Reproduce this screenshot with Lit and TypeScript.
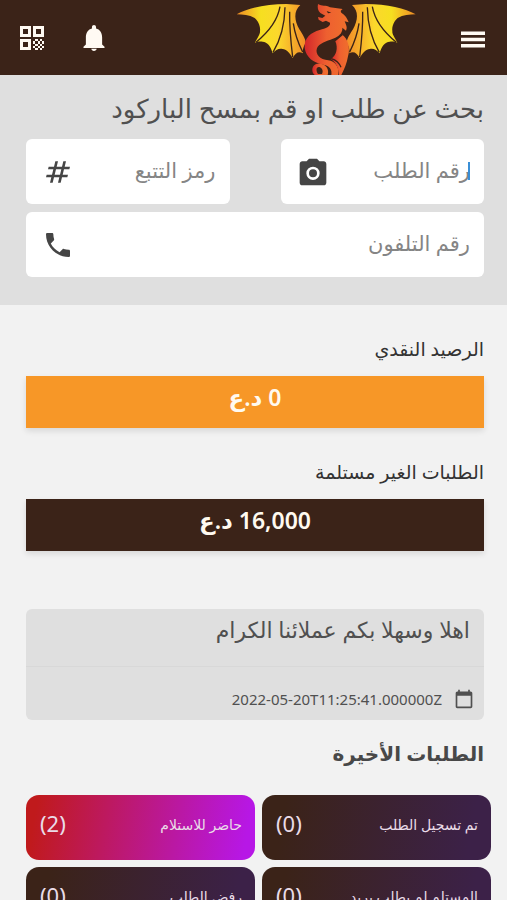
import { LitElement, html, css, svg } from "lit";
import { customElement } from "lit/decorators.js";
import { classMap } from "lit/directives/class-map.js";

const glyph = (d: string) => html`<svg class="glyph" viewBox="0 0 24 24" aria-hidden="true"><path fill-rule="evenodd" d=${d}></path></svg>`;

const PATHS = {
  menu: "M0 5.500h24v3.400H0zM0 11.800h24v3.400H0zM0 18.100h24v3.400H0z",
  bell: "M12 24c1.300 0 2.500-.9 2.500-2h-5c0 1.100 1.200 2 2.500 2zM19.500 18V11.500c0-4.300-2.200-7.500-5.600-8.300V2C13.900.8 13 0 12 0s-1.900.8-1.900 2v1.200C6.700 4 4.500 7.200 4.500 11.500V18l-2.200 2v1.200h19.400V20z",
  camera: "M9 2 7.200 4H4c-1.100 0-2 .9-2 2v14c0 1.100.9 2 2 2h16c1.100 0 2-.9 2-2V6c0-1.100-.9-2-2-2h-3.200L15 2H9zm3 6a5 5 0 1 1 0 10 5 5 0 0 1 0-10zm0 2a3 3 0 1 0 0 6 3 3 0 0 0 0-6z",
  phone: "M6.600 10.800c1.400 2.800 3.800 5.100 6.600 6.600l2.200-2.200c.3-.3.7-.4 1-.2 1.100.4 2.300.6 3.600.6.600 0 1 .4 1 1V20c0 .6-.4 1-1 1C10.600 21 3 13.400 3 4c0-.6.500-1 1-1h3.500c.6 0 1 .4 1 1 0 1.200.2 2.400.6 3.600.1.300 0 .7-.3 1z",
  calendar: "M20 3h-1V1h-2v2H7V1H5v2H4c-1.100 0-2 .9-2 2v16c0 1.100.9 2 2 2h16c1.100 0 2-.9 2-2V5c0-1.100-.9-2-2-2zm0 18H4V8h16z",
  hash: "M20.500 10l.5-2h-4l1-4h-2l-1 4h-4l1-4h-2L9 8H5l-.5 2h4l-1 4h-4L3 16h4l-1 4h2l1-4h4l-1 4h2l1-4h4l.5-2h-4l1-4zm-7 4h-4l1-4h4z",
};

const wing = svg`
  <path fill="url(#gold)" d="M20 43 C50 25 105 12 170 12 L211 15 C190 34 193 61 208 88 C222 110 230 123 225 132 C220 141 217 151 219 160 C207 153 197 157 188 174 C178 157 169 148 158 147 C147 144 137 149 128 160 C123 139 112 126 98 125 C90 123 82 125 75 128 C83 112 91 103 90 93 C92 78 84 63 74 54 C58 45 38 43 20 43Z"></path>
  <path class="vein" d="M150 20 C143 60 116 96 78 127 M165 22 C164 72 152 119 129 157 M179 35 C178 87 183 130 188 171 M190 70 C195 105 206 132 218 156"></path>`;

const dragon = html`
  <svg class="dragon" viewBox="0 0 570 225" role="img" aria-label="التنين">
    <defs>
      <linearGradient id="gold" x1="0" x2="1" y1="0" y2="0">
        <stop offset="0" stop-color="#ef8a25"></stop><stop offset="0.35" stop-color="#f6df20"></stop>
        <stop offset="0.6" stop-color="#fbd82c"></stop><stop offset="1" stop-color="#f28c28"></stop>
      </linearGradient>
      <linearGradient id="fire" x1="0" x2="1" y1="0" y2="0">
        <stop offset="0" stop-color="#d3262b"></stop><stop offset="0.5" stop-color="#ee6030"></stop>
        <stop offset="1" stop-color="#f0702c"></stop>
      </linearGradient>
    </defs>
    ${wing}
    <g transform="translate(577 0) scale(-1 1)">${wing}</g>
    <path fill="url(#fire)" d="M264 12 C276 20 287 14 300 22 L338 27 C332 31 331 34 334 38 C346 45 352 56 356 67 L344 64 C348 75 353 82 348 92 L337 83 C338 96 331 105 316 113 C297 122 275 125 263 140 C254 155 263 174 286 179 C311 181 322 193 325 210 L324 225 L304 225 C307 209 299 197 280 194 C250 188 228 172 224 143 C222 113 243 98 269 90 C288 84 302 80 300 68 L288 62 L278 66 L266 59 L264 51 L277 54 L286 47 L271 39 C263 32 262 22 264 12Z"></path>
    <path fill="url(#fire)" d="M337 104 C353 116 362 143 354 169 C351 190 342 209 334 225 L326 225 C326 205 318 187 303 178 C319 166 325 145 316 124Z"></path>
    <path fill="url(#fire)" fill-rule="evenodd" d="M271 191 C257 188 246 198 247 211 C247 217 250 222 254 225 L293 225 C298 207 289 194 271 191Z M268 201 C278 204 280 215 276 222 L264 222 C258 213 257 200 268 201Z"></path>
    <path class="vein" d="M304 176 C318 180 328 190 333 202 M316 121 L337 104"></path>
    <path fill="#3b2318" d="M290 33 L304 38 L294 40Z"></path>
  </svg>`;

const qr = html`
  <svg class="glyph" viewBox="0 0 24 24" aria-hidden="true">
    <path fill-rule="evenodd" d="M0 0h11v11H0zM3 3v5h5V3zM13 0h11v11H13zM16 3v5h5V3zM0 13h11v11H0zM3 16v5h5v-5z"></path>
    <path d="M15 13h3v2h-3zM20 13h2v2h-2zM13 15h2v3h-2zM18 15h2v3h-2zM22 15h2v3h-2zM15 18h3v2h-3zM20 18h2v2h-2zM13 20h2v2h-2zM18 20h2v2h-2zM22 20h2v2h-2zM15 22h3v2h-3zM20 22h2v2h-2z"></path>
  </svg>`;

@customElement("app-root")
export class AppRoot extends LitElement {
  static styles = css`
    :host {
      display: block;
      direction: rtl;
      min-height: 100vh;
      background: #f2f2f2;
      color: #505050;
      font-family: "Noto Sans", "DejaVu Sans", sans-serif;
    }
    * { box-sizing: border-box; }
    h1, h2, h3, p { margin: 0; font-weight: 400; }
    button { border: 0; padding: 0; background: none; color: inherit; font: inherit; cursor: pointer; }
    .glyph { display: block; flex: none; width: 24px; height: 24px; fill: currentColor; }
    .vein { fill: none; stroke: #3b2318; stroke-width: 4; }
    header {
      display: flex;
      align-items: center;
      height: 75px;
      padding: 0 22px 0 20px;
      background: #3b2318;
      color: #fffaf3;
    }
    .dragon { width: 190px; height: 75px; margin-right: 41px; }
    .actions { display: flex; gap: 37px; margin-right: auto; }
    .bell .glyph { width: 26px; height: 26px; }
    .actions button { display: flex; align-items: center; }
    .search { padding: 16px 23px 28px 26px; background: #dfdfdf; }
    h1 { font-size: 26px; line-height: 34px; margin-bottom: 14px; white-space: nowrap; }
    .fields { display: grid; grid-template-columns: repeat(2, minmax(0, 1fr)); gap: 8px 51px; }
    .field {
      position: relative;
      display: flex;
      align-items: center;
      height: 65px;
      padding: 0 14px 0 16px;
      border-radius: 6px;
      background: #fff;
      color: #454545;
    }
    .wide { grid-column: 1 / -1; }
    .field input {
      flex: 1;
      min-width: 0;
      height: 44px;
      padding: 0 0 4px;
      border: 0;
      outline: 0;
      background: none;
      font: inherit;
      font-size: 21px;
      color: #505050;
    }
    .field input::placeholder { color: #858585; opacity: 1; }
    .field .glyph { width: 32px; height: 32px; }
    .caret { position: absolute; top: 23px; right: 14px; width: 2px; height: 18px; background: #3a8fd6; }
    .content { padding: 30px 23px 0 26px; }
    h2 { color: #333; font-size: 19px; line-height: 28px; }
    .amount {
      height: 52px;
      margin: 13px 0 30px;
      color: #fffaf0;
      font-size: 23px;
      font-weight: 600;
      line-height: 42px;
      text-align: center;
      box-shadow: 0 3px 6px #0000001c;
    }
    .orange { background: #f79727; }
    .brown { background: #3b2318; }
    .notice { margin-top: 58px; border-radius: 6px; background: #dfdfdf; }
    .notice h3 { height: 58px; padding: 4px 14px; border-bottom: 1px solid #d8d8d8; font-size: 22px; line-height: 32px; }
    .date { display: flex; align-items: center; gap: 12px; height: 53px; padding: 10px 10px 0; font-size: 15px; }
    .date .glyph { width: 20px; height: 20px; }
    .recent { margin: 17px 0 24px; color: #484848; font-size: 20px; font-weight: 700; line-height: 34px; }
    .statuses { display: grid; grid-template-columns: repeat(2, minmax(0, 1fr)); gap: 7px; padding: 0 16px 0 26px; }
    .status {
      display: flex;
      align-items: center;
      justify-content: space-between;
      height: 65px;
      padding: 0 13px 9px 14px;
      border-radius: 13px;
      background: linear-gradient(100deg, #3b2318 10%, #3c2148 90%);
      color: #eadce8;
    }
    .ready { background: linear-gradient(100deg, #c01a1c 5%, #b717e6 95%); }
    .name { font-size: 14px; padding-top: 3px; }
    .count { font-size: 22px; direction: ltr; }
  `;

  private statuses = [
    { name: "تم تسجيل الطلب", count: 0, ready: false },
    { name: "حاضر للاستلام", count: 2, ready: true },
    { name: "المستلم لم يطلب بريد", count: 0, ready: false },
    { name: "رفض الطلب", count: 0, ready: false },
  ];

  render() {
    return html`
      <header>
        <button aria-label="القائمة">${glyph(PATHS.menu)}</button>
        ${dragon}
        <div class="actions">
          <button class="bell" aria-label="الإشعارات">${glyph(PATHS.bell)}</button>
          <button aria-label="رمز الاستجابة">${qr}</button>
        </div>
      </header>
      <section class="search">
        <h1>بحث عن طلب او قم بمسح الباركود</h1>
        <div class="fields">
          <div class="field">
            <input type="text" placeholder="رقم الطلب" aria-label="رقم الطلب" />
            <span class="caret"></span>
            <button aria-label="مسح الباركود">${glyph(PATHS.camera)}</button>
          </div>
          <label class="field">
            <input type="text" placeholder="رمز التتبع" aria-label="رمز التتبع" />${glyph(PATHS.hash)}
          </label>
          <label class="field wide">
            <input type="tel" dir="rtl" placeholder="رقم التلفون" aria-label="رقم التلفون" />${glyph(PATHS.phone)}
          </label>
        </div>
      </section>
      <main>
        <div class="content">
          <h2>الرصيد النقدي</h2>
          <p class="amount orange">0 د.ع</p>
          <h2>الطلبات الغير مستلمة</h2>
          <p class="amount brown">16,000 د.ع</p>
          <article class="notice">
            <h3>اهلا وسهلا بكم عملائنا الكرام</h3>
            <div class="date">${glyph(PATHS.calendar)}<time dir="ltr">2022-05-20T11:25:41.000000Z</time></div>
          </article>
          <h2 class="recent">الطلبات الأخيرة</h2>
        </div>
        <div class="statuses">
          ${this.statuses.map((s) => html`
            <button class=${classMap({ status: true, ready: s.ready })}>
              <span class="name">${s.name}</span><span class="count">(${s.count})</span>
            </button>`)}
        </div>
      </main>
    `;
  }
}
